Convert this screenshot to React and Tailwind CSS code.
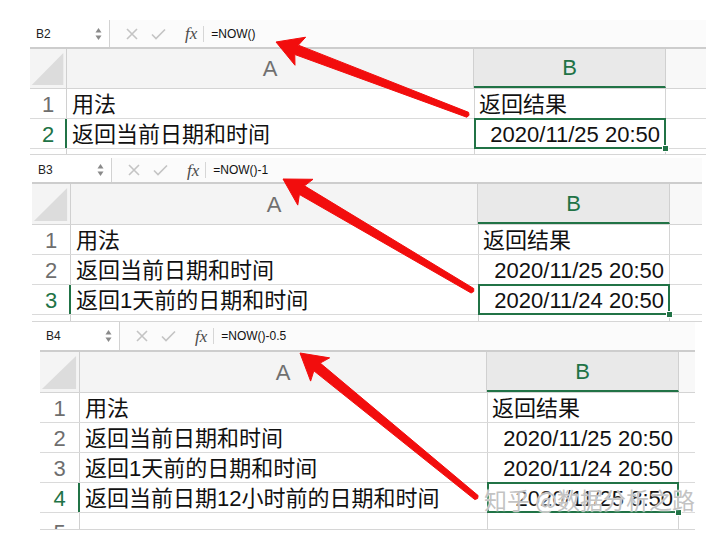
import React from 'react';

const FONT = { fontFamily: '"Liberation Sans", "Noto Sans CJK SC", sans-serif' };

const Spinner = () => (
    <svg width="7" height="14" viewBox="0 0 7 14" className="absolute right-[7px] top-1/2 -translate-y-1/2">
        <path d="M3.5 1 L6.5 5.5 L0.5 5.5 Z" fill="#8a8a8a" />
        <path d="M3.5 13 L6.5 8.5 L0.5 8.5 Z" fill="#8a8a8a" />
    </svg>
);

const FormulaBar = ({ name, formula, h }) => (
    <div className={`flex items-center ${h} bg-[#fbfbfb] border-b-2 border-[#cdcdcd]`}>
        <div className="relative w-[80px] h-full flex items-center pl-[6px] bg-white border-r border-[#d2d2d2] text-[12px] text-[#222]">
            {name}
            <Spinner />
        </div>
        <svg width="12" height="12" viewBox="0 0 12 12" className="ml-[16px]">
            <path d="M1 1 L11 11 M11 1 L1 11" stroke="#c4c4c4" strokeWidth="1.6" />
        </svg>
        <svg width="15" height="12" viewBox="0 0 15 12" className="ml-[13px]">
            <path d="M1 6.5 L5 10.5 L14 1.5" stroke="#c4c4c4" strokeWidth="1.6" fill="none" />
        </svg>
        <span className="ml-[19px] text-[17px] italic text-[#4a4a4a] leading-none" style={{ fontFamily: '"Liberation Serif", serif' }}>
            fx
        </span>
        <span className="ml-[6px] w-px h-[16px] bg-[#d6d6d6]" />
        <span className="ml-[7px] text-[12px] text-[#111]">{formula}</span>
    </div>
);

const HeaderRow = ({ hdrW, h }) => (
    <div className={`flex ${h} border-b border-[#d4d4d4]`}>
        <div className={`relative ${hdrW} h-full bg-[#f4f4f4] border-r border-[#d0d0d0]`}>
            <svg className="absolute inset-0 w-full h-full" viewBox="0 0 40 40" preserveAspectRatio="none">
                <path d="M2 37 L37 37 L37 4 Z" fill="#dcdcdc" />
            </svg>
        </div>
        <div className="w-[407px] h-full bg-[#f4f4f4] border-r border-[#d0d0d0] flex items-center justify-center text-[22px] text-[#707070]">
            A
        </div>
        <div className="w-[192px] h-full bg-[#e9e9e9] border-b-2 border-[#217346] border-r border-r-[#d0d0d0] flex items-center justify-center text-[22px] text-[#217346]">
            B
        </div>
        <div className="flex-1 h-full bg-[#f8f8f8]" />
    </div>
);

const Row = ({ hdrW, num, a, b, active, right }) => (
    <div className="flex h-[30px] border-b border-[#dadada] text-[22px] leading-none">
        <div className={`relative ${hdrW} h-full flex items-center justify-center border-r border-[#d0d0d0] ${active ? 'text-[#217346]' : 'text-[#6e6e6e]'}`}>
            <span className="pt-[2px]">{num}</span>
            {active && <span className="absolute -right-[1px] top-0 bottom-0 w-[2px] bg-[#217346]" />}
        </div>
        <div className="w-[407px] h-full flex items-center pl-[5px] text-[#111] whitespace-nowrap">
            <span className="pt-[2px]">{a}</span>
        </div>
        <div className={`relative w-[192px] h-full flex items-center border-l border-r border-[#d4d4d4] text-[#111] whitespace-nowrap ${right ? 'justify-end pr-[5px]' : 'pl-[4px]'}`}>
            <span className="pt-[2px]">{b}</span>
            {active && (
                <>
                    <span className="absolute -left-[1px] -top-[1px] -right-[1px] -bottom-[1px] border-2 border-[#217346]" />
                    <span className="absolute -right-[4px] -bottom-[4px] w-[7px] h-[7px] bg-[#217346] border border-white" />
                </>
            )}
        </div>
        <div className="flex-1 h-full" />
    </div>
);

const Tail = ({ hdrW, h, num }) => (
    <div className={`flex ${h} overflow-hidden border-b border-[#d6d6d6] text-[22px] leading-none`}>
        <div className={`${hdrW} flex justify-center items-start border-r border-[#d0d0d0] text-[#6e6e6e]`}>
            {num && <span className="pt-[9px]">{num}</span>}
        </div>
        <div className="w-[407px]" />
        <div className="w-[192px] border-l border-r border-[#d4d4d4]" />
        <div className="flex-1" />
    </div>
);

const data = [
    ['用法', '返回结果', false],
    ['返回当前日期和时间', '2020/11/25 20:50', true],
    ['返回1天前的日期和时间', '2020/11/24 20:50', true],
    ['返回当前日期12小时前的日期和时间', '2020/11/25 8:50', true],
];

const Panel = ({ box, hdrW, barH, hdrH, name, formula, count, tailH, tailNum }) => (
    <div className={box}>
        <FormulaBar name={name} formula={formula} h={barH} />
        <HeaderRow hdrW={hdrW} h={hdrH} />
        {data.slice(0, count).map(([a, b, right], i) => (
            <Row key={i} hdrW={hdrW} num={i + 1} a={a} b={b} right={right} active={i === count - 1} />
        ))}
        <Tail hdrW={hdrW} h={tailH} num={tailNum} />
    </div>
);

const Arrow = ({ tip, u, len = 205 }) => {
    const n = [-u[1], u[0]];
    const p = (base, along, side) => [base[0] + u[0] * along + n[0] * side, base[1] + u[1] * along + n[1] * side];
    const pts = [
        p(tip, 0, 0),
        p(tip, 26, -15),
        p(tip, 22, -5),
        p(tip, len, -2.6),
        p(tip, len + 1.5, 0),
        p(tip, len, 2.6),
        p(tip, 22, 5),
        p(tip, 26, 15),
    ];
    return <polygon points={pts.map((q) => q.join(',')).join(' ')} fill="#f20d0d" strokeLinejoin="round" stroke="#f20d0d" strokeWidth="1" />;
};

export default function App() {
    return (
        <div className="relative w-[720px] h-[536px] bg-white overflow-hidden" style={FONT}>
            <Panel box="ml-[30px] w-[676px] pt-[20px]" hdrW="w-[37px]" barH="h-[29px]" hdrH="h-[40px]" name="B2" formula="=NOW()" count={2} tailH="h-[6px]" />
            <Panel box="ml-[32px] w-[670px] mt-[3px]" hdrW="w-[39px]" barH="h-[26px]" hdrH="h-[41px]" name="B3" formula="=NOW()-1" count={3} tailH="h-[7px]" />
            <Panel box="ml-[40px] w-[655px]" hdrW="w-[40px]" barH="h-[30px]" hdrH="h-[41px]" name="B4" formula="=NOW()-0.5" count={4} tailH="h-[17px]" tailNum={5} />

            <svg className="absolute inset-0 pointer-events-none" width="720" height="536" viewBox="0 0 720 536">
                <Arrow tip={[276, 42]} u={[0.935, 0.355]} len={205} />
                <Arrow tip={[283, 179]} u={[0.861, 0.508]} len={220} />
                <Arrow tip={[300, 353]} u={[0.774, 0.634]} len={228} />
            </svg>

            <div
                className="absolute left-[484px] top-[488px] text-[23px] leading-none whitespace-nowrap text-[#b0b0b0]/75 pointer-events-none"
                style={{ fontFamily: '"Noto Sans CJK SC", sans-serif', textShadow: '0 0 2px #fff, 0 0 1px #fff' }}
            >
                知乎 @数据分析之路
            </div>
        </div>
    );
}
